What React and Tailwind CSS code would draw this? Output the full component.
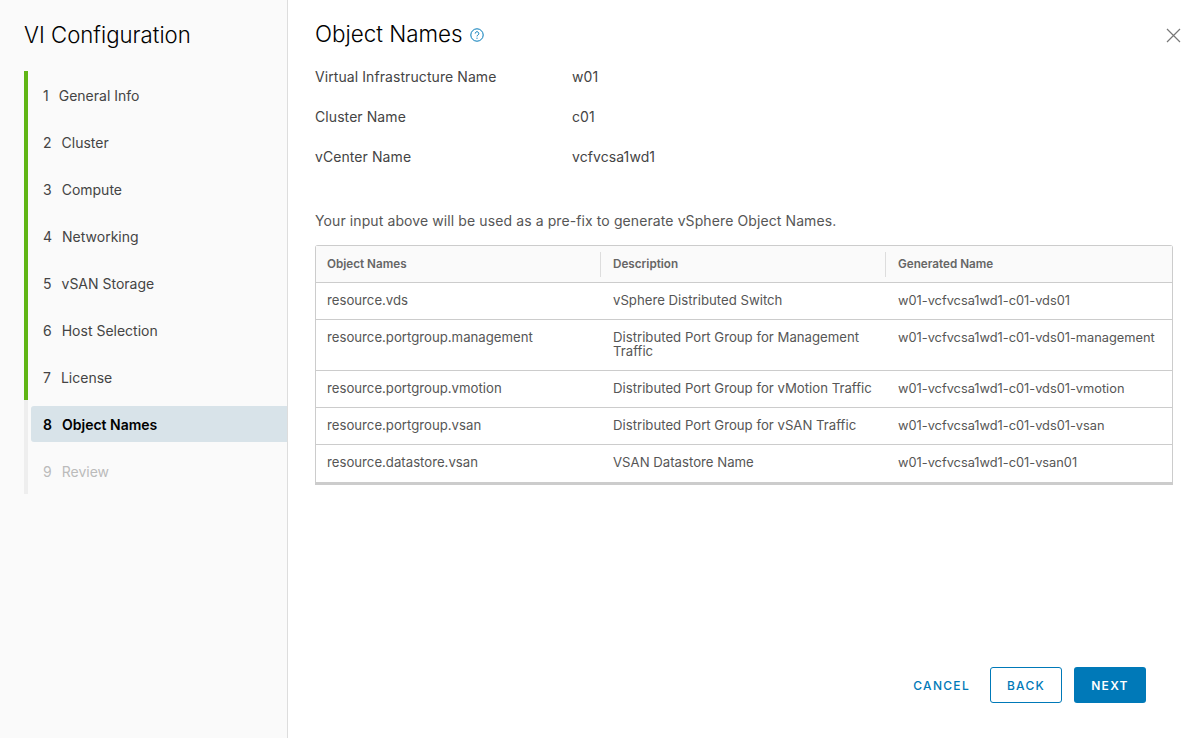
const steps = ["General Info","Cluster","Compute","Networking","vSAN Storage","Host Selection","License","Object Names","Review"];
const fields = [["Virtual Infrastructure Name","w01"],["Cluster Name","c01"],["vCenter Name","vcfvcsa1wd1"]];
const rows = [
  ["resource.vds","vSphere Distributed Switch","w01-vcfvcsa1wd1-c01-vds01"],
  ["resource.portgroup.management","Distributed Port Group for Management Traffic","w01-vcfvcsa1wd1-c01-vds01-management"],
  ["resource.portgroup.vmotion","Distributed Port Group for vMotion Traffic","w01-vcfvcsa1wd1-c01-vds01-vmotion"],
  ["resource.portgroup.vsan","Distributed Port Group for vSAN Traffic","w01-vcfvcsa1wd1-c01-vds01-vsan"],
  ["resource.datastore.vsan","VSAN Datastore Name","w01-vcfvcsa1wd1-c01-vsan01"],
];
function Step({n,label}){
  const active = n===8, future = n===9, done = n<8;
  return (
    <div className={`flex h-[47px] pl-[3px] border-l-4 ${done?"border-[#60b515]":"border-[#eeeeee]"}`}>
      <div className={`mt-[6px] h-9 flex-1 flex items-center pl-[12px] pt-[1px] rounded-l-[3px] text-[14px] ${active?"bg-[#d8e3e9] text-black font-semibold":future?"text-[#bbbbbb]":"text-[#444444]"}`}>
        <span className="mr-[10px]">{n}</span><span>{label}</span>
      </div>
    </div>
  );
}
export default function App(){
  return (
    <div className="flex h-[738px] w-[1197px] overflow-hidden bg-white text-[#333333]" style={{fontFamily:'Inter, "Liberation Sans", sans-serif'}}>
      <aside className="w-[288px] shrink-0 bg-[#fafafa] border-r border-[#dddddd] pl-6 pt-[20px]">
        <h1 className="text-[22.2px] leading-[28px] pt-[1px] font-light text-black h-[51px]">VI Configuration</h1>
        <div>{steps.map((s,i)=><Step key={s} n={i+1} label={s}/>)}</div>
      </aside>
      <main className="relative flex-1 pl-[27px] pr-6 pt-[19px]">
        <div className="flex items-center h-[28px]">
          <h2 className="text-[22.4px] font-light text-black leading-[28px] pt-[2px]">Object Names</h2>
          <svg className="ml-[7px] mt-[3px]" width="14" height="14" viewBox="0 0 14 14" fill="none" stroke="#0079b8">
            <circle cx="7" cy="7" r="6.2" strokeWidth="1"/>
            <path d="M5.2 5.5a1.8 1.8 0 1 1 2.7 1.6c-.6.3-.9.7-.9 1.3" strokeWidth="1"/>
            <circle cx="7" cy="10.2" r=".6" fill="#0079b8" stroke="none"/>
          </svg>
        </div>
        <button className="absolute top-[28px] right-[16px] text-[#777777]" aria-label="Close">
          <svg width="15" height="15" viewBox="0 0 15 15" stroke="currentColor" strokeWidth="1.2"><path d="M1 1l13 13M14 1L1 14"/></svg>
        </button>
        <div className="mt-[9px]">
          {fields.map(([k,v])=>(
            <div key={k} className="flex h-[40px] items-center text-[14px] tracking-[0.08px] text-[#444444]">
              <span className="w-[257px]">{k}</span><span>{v}</span>
            </div>
          ))}
        </div>
        <p className="mt-[35px] text-[14px] tracking-[0.1px] leading-[20px] text-[#565656]">Your input above will be used as a pre-fix to generate vSphere Object Names.</p>
        <div className="mt-[14px] w-[858px] border border-[#cccccc] border-b-[3px] rounded-t-[3px] text-[13.2px] text-[#565656]">
          <div className="grid grid-cols-[285px_285px_1fr] bg-[#fafafa] h-[37px] items-center border-b border-[#cccccc] text-[11.7px] font-semibold text-[#666666]">
            {["Object Names","Description","Generated Name"].map((h,i)=>(
              <div key={h} className={`${i===0?"pl-[11px]":"pl-3"} pt-[2px] h-[25px] flex items-center ${i<2?"border-r border-[#dddddd]":""}`}>{h}</div>
            ))}
          </div>
          {rows.map((r,i)=>(
            <div key={r[0]} className={`grid grid-cols-[285px_285px_1fr] pt-[10px] leading-[14px] ${i===1?"h-[51px]":"h-[37px]"} ${i<4?"border-b border-[#cccccc]":""}`}>
              {r.map((c,j)=><div key={c} className={`${j===0?"pl-[11px]":"pl-3"} pr-2 ${j===2?"text-[12.8px] pt-[1px]":""}`}>{c}</div>)}
            </div>
          ))}
        </div>
        <div className="absolute top-[667px] right-[51px] flex items-center text-[12px] font-medium tracking-[1.3px]">
          <button className="text-[#0079b8] mr-[20px] h-9 pt-[2px]">CANCEL</button>
          <button className="text-[#0079b8] w-[72px] h-9 pt-[2px] border border-[#0079b8] rounded-[3px] bg-white mr-3">BACK</button>
          <button className="text-white w-[72px] h-9 pt-[2px] rounded-[3px] bg-[#0079b8] font-semibold">NEXT</button>
        </div>
      </main>
    </div>
  );
}
